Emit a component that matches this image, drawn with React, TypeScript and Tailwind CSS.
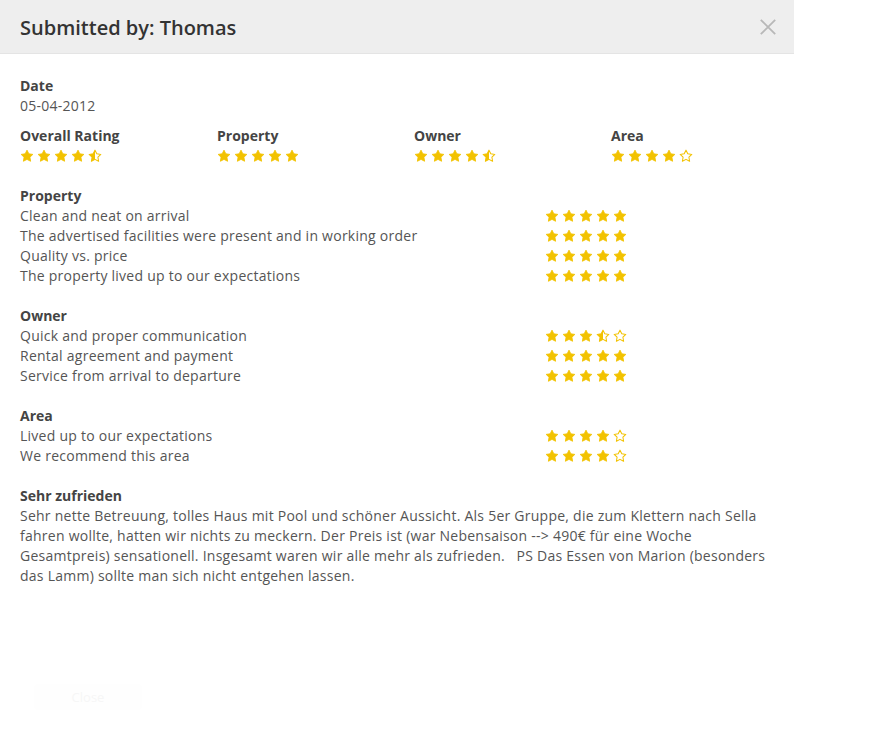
import { useId } from "react";

const STAR = "12,2 15.09,8.26 22,9.27 17,14.14 18.18,21.02 12,17.77 5.82,21.02 7,14.14 2,9.27 8.91,8.26";

function Star({ fill }: { fill: "full" | "half" | "empty" }) {
  const id = useId();
  return (
    <svg viewBox="0 0 24 24" className="w-[14px] h-[14px]">
      {fill === "half" ? (
        <defs>
          <clipPath id={id}>
            <rect x="0" y="0" width="12" height="24" />
          </clipPath>
        </defs>
      ) : null}
      {fill === "full" ? (
        <polygon points={STAR} fill="#f2c200" stroke="#f2c200" strokeWidth="1.5" strokeLinejoin="round" />
      ) : (
        <>
          <polygon points={STAR} fill="none" stroke="#f2c200" strokeWidth="1.8" strokeLinejoin="round" />
          {fill === "half" ? (
            <polygon points={STAR} fill="#f2c200" clipPath={`url(#${id})`} />
          ) : null}
        </>
      )}
    </svg>
  );
}

function Stars({ value }: { value: number }) {
  return (
    <div className="flex items-center gap-[3px] h-5 shrink-0">
      {[1, 2, 3, 4, 5].map((i) => (
        <Star
          key={i}
          fill={value >= i ? "full" : value >= i - 0.5 ? "half" : "empty"}
        />
      ))}
    </div>
  );
}

const summary = [
  { label: "Overall Rating", value: 4.5 },
  { label: "Property", value: 5 },
  { label: "Owner", value: 4.5 },
  { label: "Area", value: 4 },
];

const groups = [
  {
    title: "Property",
    rows: [
      ["Clean and neat on arrival", 5],
      ["The advertised facilities were present and in working order", 5],
      ["Quality vs. price", 5],
      ["The property lived up to our expectations", 5],
    ],
  },
  {
    title: "Owner",
    rows: [
      ["Quick and proper communication", 3.5],
      ["Rental agreement and payment", 5],
      ["Service from arrival to departure", 5],
    ],
  },
  {
    title: "Area",
    rows: [
      ["Lived up to our expectations", 4],
      ["We recommend this area", 4],
    ],
  },
] as { title: string; rows: [string, number][] }[];

export default function App() {
  return (
    <div className="w-[892px] h-[730px] bg-white text-[#555] text-[14px] leading-5 font-['Open_Sans',sans-serif]">
      <div className="w-[794px]">
        <div className="h-[54px] bg-[#eeeeee] border-b border-[#e4e4e4] flex items-center justify-between pl-5 pr-4">
          <h1 className="text-[20px] font-semibold text-[#333] pt-[2px]">Submitted by: Thomas</h1>
          <svg viewBox="0 0 20 20" className="w-[18px] h-[18px] mr-[1px]">
            <path d="M2 2 L18 18 M18 2 L2 18" stroke="#b8b8b8" strokeWidth="2" />
          </svg>
        </div>

        <div className="px-5 pt-[22px] tracking-[0.25px]">
          <div>
            <p className="font-bold text-[#444] tracking-normal">Date</p>
            <p>05-04-2012</p>
          </div>

          <div className="flex mt-[10px]">
            {summary.map((s) => (
              <div key={s.label} className="w-[197px] shrink-0">
                <p className="font-bold text-[#444] tracking-normal">{s.label}</p>
                <Stars value={s.value} />
              </div>
            ))}
          </div>

          {groups.map((g) => (
            <div key={g.title} className="mt-5">
              <p className="font-bold text-[#444] tracking-normal">{g.title}</p>
              {g.rows.map(([label, v]) => (
                <div key={label} className="flex">
                  <span className="w-[525px] shrink-0">{label}</span>
                  <Stars value={v} />
                </div>
              ))}
            </div>
          ))}

          <div className="mt-5 w-[764px]">
            <p className="font-bold text-[#444] tracking-normal">Sehr zufrieden</p>
            <p>
              Sehr nette Betreuung, tolles Haus mit Pool und schöner Aussicht. Als 5er Gruppe, die zum Klettern nach Sella
              fahren wollte, hatten wir nichts zu meckern. Der Preis ist (war Nebensaison --&gt; 490€ für eine Woche
              Gesamtpreis) sensationell. Insgesamt waren wir alle mehr als zufrieden.{"\u00a0\u00a0 "}PS Das Essen von Marion (besonders
              das Lamm) sollte man sich nicht entgehen lassen.
            </p>
          </div>
        </div>
      </div>

      <div className="mt-[98px] ml-[34px] w-[108px] h-[26px] rounded bg-[#fefefe] flex items-center justify-center text-[13px] text-[#f6f6f6]">
        Close
      </div>
    </div>
  );
}
